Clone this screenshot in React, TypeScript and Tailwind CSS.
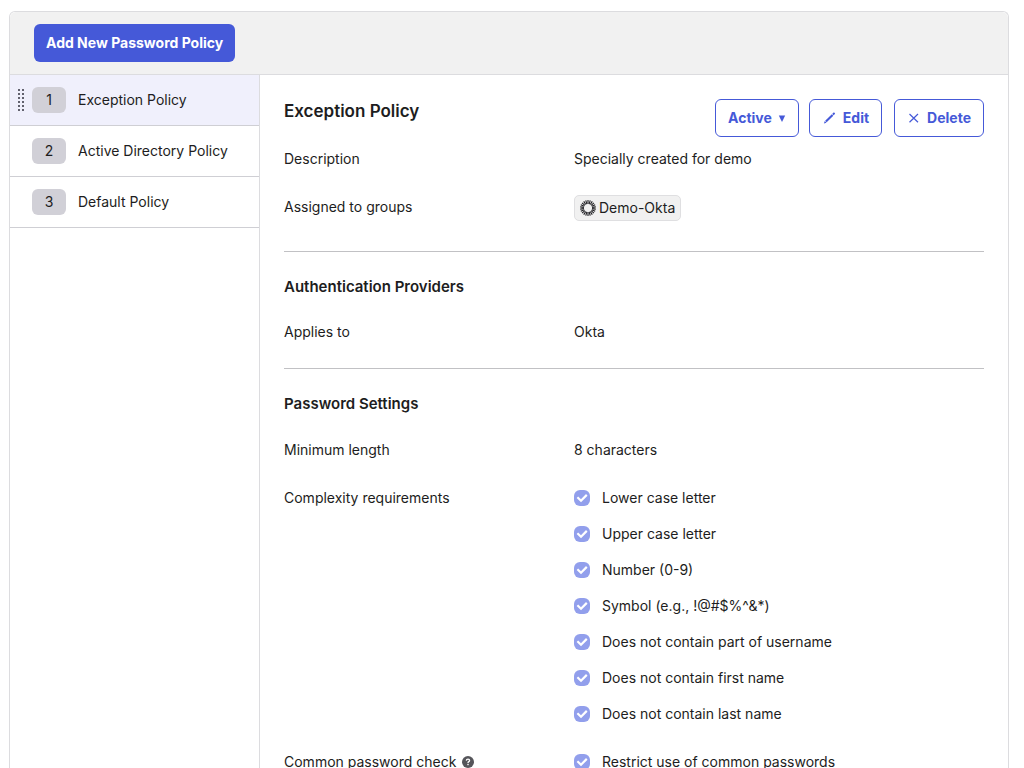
import type { ReactNode } from "react";

const policies = ["Exception Policy", "Active Directory Policy", "Default Policy"];

const requirements = [
  "Lower case letter",
  "Upper case letter",
  "Number (0-9)",
  "Symbol (e.g., !@#$%^&*)",
  "Does not contain part of username",
  "Does not contain first name",
  "Does not contain last name",
];

function DragHandle() {
  const rows = [0, 1, 2, 3, 4, 5];
  return (
    <svg width="6" height="22" viewBox="0 0 6 22" fill="#62626e" aria-hidden="true">
      {rows.map((r) => (
        <g key={r}>
          <rect x="0" y={r * 4} width="2" height="2" />
          <rect x="4" y={r * 4} width="2" height="2" />
        </g>
      ))}
    </svg>
  );
}

function GroupIcon() {
  const rays = Array.from({ length: 22 }, (_, i) => (i * 360) / 22);
  return (
    <svg width="16" height="16" viewBox="0 0 16 16" aria-hidden="true">
      {rays.map((a) => (
        <path key={a} d="M8 0.1V3.9" stroke="#1d1d21" strokeWidth="1.1" transform={`rotate(${a} 8 8)`} />
      ))}
    </svg>
  );
}

function OutlineButton({ children, className }: { children: ReactNode; className: string }) {
  return (
    <button
      type="button"
      className={`flex h-[38px] items-center rounded-md border border-[#4559d8] bg-white px-3 text-sm font-bold text-[#4559d8] ${className}`}
    >
      {children}
    </button>
  );
}

function Row({ label, children }: { label: ReactNode; children: ReactNode }) {
  return (
    <div className="flex items-start">
      <dt className="w-[290px] shrink-0">{label}</dt>
      <dd className="min-w-0 flex-1">{children}</dd>
    </div>
  );
}

function Check({ label }: { label: string }) {
  return (
    <label className="flex items-center gap-3">
      <span className="grid size-4 shrink-0">
        <input
          type="checkbox"
          defaultChecked
          disabled
          className="col-start-1 row-start-1 size-4 appearance-none rounded-md bg-[#929fec]"
        />
        <svg
          className="pointer-events-none col-start-1 row-start-1"
          width="16"
          height="16"
          viewBox="0 0 16 16"
          fill="none"
          stroke="#fff"
          strokeWidth="2.2"
          aria-hidden="true"
        >
          <path d="M3.4 7.2L7 10.7L12.8 4.9" />
        </svg>
      </span>
      {label}
    </label>
  );
}

export default function App() {
  return (
    <div className="flex h-screen flex-col overflow-hidden bg-white pt-[11px] pr-[15px] pl-[9px] font-['Inter','Liberation_Sans',sans-serif] text-sm leading-6 text-[#1d1d21]">
      <div className="flex min-h-0 flex-1 flex-col rounded-t-md border border-b-0 border-[#dcdcdf]">
        <header className="flex rounded-t-md border-b border-[#dcdcdf] bg-[#f1f1f1] px-6 py-3">
          <button type="button" className="h-[38px] rounded-md bg-[#4559d8] px-3 text-sm font-bold text-white">
            Add New Password Policy
          </button>
        </header>
        <div className="flex min-h-0 flex-1">
          <nav className="w-[250px] shrink-0 border-r border-[#dcdcdf]">
            <ol>
              {policies.map((name, i) => (
                <li key={name} className="border-b border-[#cfcfd4]">
                  <a
                    href={`#policy-${i + 1}`}
                    className={`flex h-[50px] items-center pl-2 ${i === 0 ? "bg-[#f0f0fc]" : "bg-white"}`}
                  >
                    <span className="w-[14px]">{i === 0 && <DragHandle />}</span>
                    <span className="flex h-[26px] w-[34px] items-center justify-center rounded-md bg-[#d1d0d7]">
                      {i + 1}
                    </span>
                    <span className="ml-3">{name}</span>
                  </a>
                </li>
              ))}
            </ol>
          </nav>
          <main className="min-w-0 flex-1 overflow-hidden px-6 pt-6">
            <div className="mb-[10px] flex items-start justify-between">
              <h1 className="text-[17px] leading-6 font-semibold">Exception Policy</h1>
              <div className="flex">
                <OutlineButton className="gap-[6px]">
                  Active
                  <svg width="8" height="8" viewBox="0 0 8 8" fill="currentColor" aria-hidden="true">
                    <path d="M0.8 1.4H7.2L4 8Z" />
                  </svg>
                </OutlineButton>
                <OutlineButton className="ml-[10px] gap-[7px]">
                  <svg width="14" height="14" viewBox="0 0 14 14" aria-hidden="true">
                    <path d="M3.9 10.6L10.6 4" fill="none" stroke="currentColor" strokeWidth="2.1" />
                    <path d="M10.2 2.9L11.5 1.6Q12.8 1.4 13.1 2.8L11.7 4.2Z M2.8 9.9L4.5 11.7L1.9 12.6Z" fill="currentColor" />
                  </svg>
                  Edit
                </OutlineButton>
                <OutlineButton className="ml-3 gap-[6px]">
                  <svg
                    width="14"
                    height="14"
                    viewBox="0 0 14 14"
                    fill="none"
                    stroke="currentColor"
                    strokeWidth="1.2"
                    aria-hidden="true"
                  >
                    <path d="M2.5 3L11 11.3M11 3L2.5 11.3" />
                  </svg>
                  Delete
                </OutlineButton>
              </div>
            </div>
            <dl className="flex flex-col gap-6">
              <Row label="Description">Specially created for demo</Row>
              <Row label="Assigned to groups">
                <span className="flex h-[26px] w-fit items-center gap-[3px] rounded-[5px] border border-[#dfdfe1] bg-[#f1f1f1] px-[5px]">
                  <GroupIcon />
                  Demo-Okta
                </span>
              </Row>
            </dl>
            <section className="mt-[30px] border-t border-[#c1c1c4] pt-[23px]">
              <h2 className="mb-[21px] text-[15px] leading-6 font-semibold">Authentication Providers</h2>
              <dl>
                <Row label="Applies to">Okta</Row>
              </dl>
            </section>
            <section className="mt-6 border-t border-[#c1c1c4] pt-[23px]">
              <h2 className="mb-[22px] text-[15px] leading-6 font-semibold">Password Settings</h2>
              <dl className="flex flex-col gap-6">
                <Row label="Minimum length">8 characters</Row>
                <Row label="Complexity requirements">
                  <div className="flex flex-col gap-3">
                    {requirements.map((r) => (
                      <Check key={r} label={r} />
                    ))}
                  </div>
                </Row>
                <Row
                  label={
                    <span className="flex items-center gap-[6px]">
                      Common password check
                      <svg width="12" height="12" viewBox="0 0 12 12" role="img" aria-label="Help">
                        <circle cx="6" cy="6" r="6" fill="#55555a" />
                        <path
                          d="M4.3 4.6Q4.4 3.1 6 3.1T7.6 4.5Q7.6 5.3 6.8 5.7T6 6.9"
                          fill="none"
                          stroke="#fff"
                          strokeWidth="1.3"
                        />
                        <rect x="5.3" y="7.8" width="1.4" height="1.4" fill="#fff" />
                      </svg>
                    </span>
                  }
                >
                  <Check label="Restrict use of common passwords" />
                </Row>
              </dl>
            </section>
          </main>
        </div>
      </div>
    </div>
  );
}
